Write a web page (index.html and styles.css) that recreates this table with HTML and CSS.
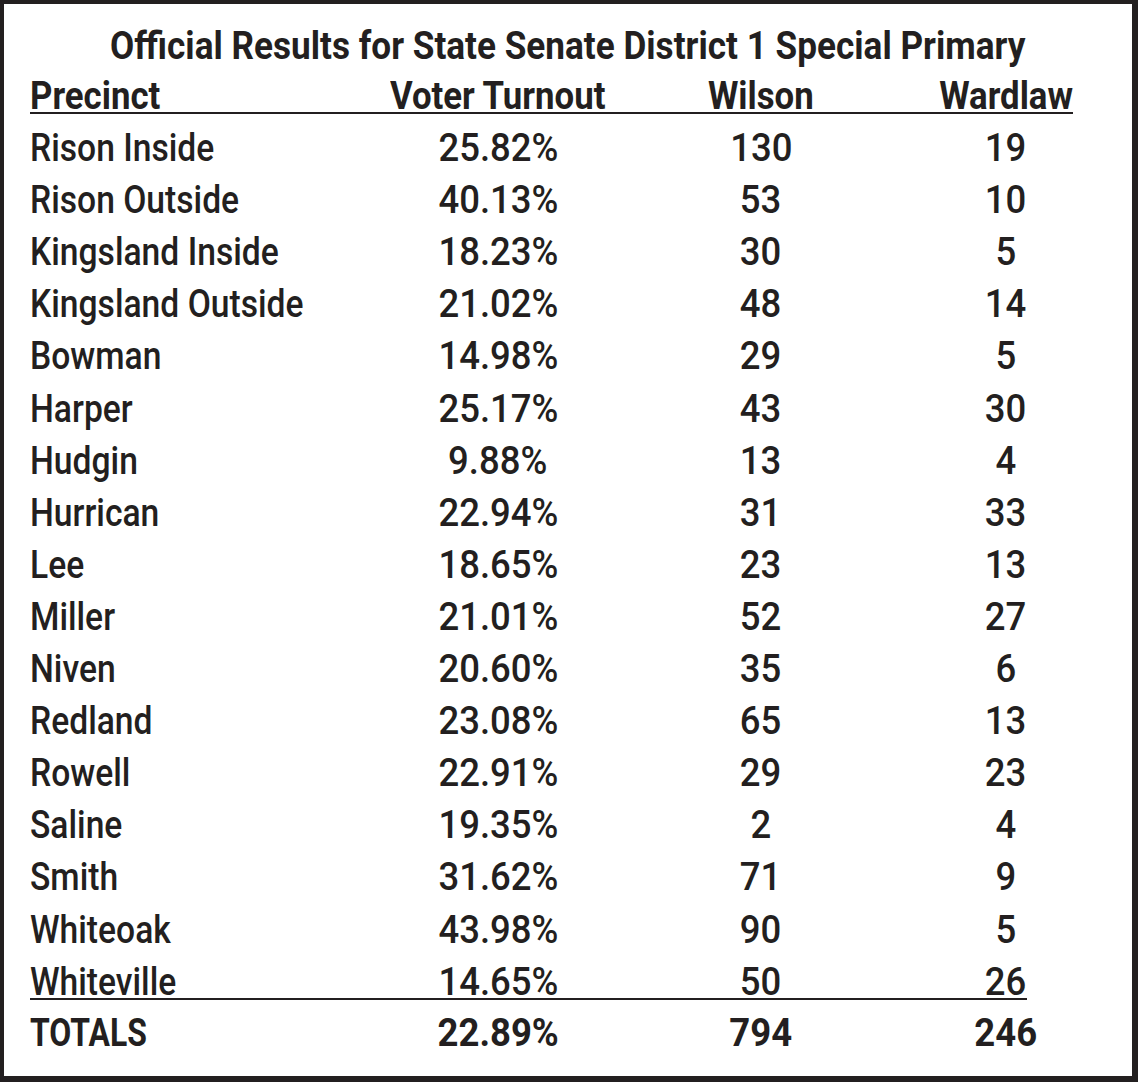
FILE: index.html
```html
<!DOCTYPE html>
<html lang="en">
<head>
<meta charset="utf-8">
<title>Official Results for State Senate District 1 Special Primary</title>
<link rel="stylesheet" href="styles.css">
</head>
<body>
<div class="sheet">
  <h1 class="title"><span class="t">Official Results for State Senate District 1 Special Primary</span></h1>
  <div class="table">
    <div class="row head">
      <div class="cell"><span class="t">Precinct</span></div>
      <div class="cell"><span class="t">Voter Turnout</span></div>
      <div class="cell"><span class="t">Wilson</span></div>
      <div class="cell"><span class="t">Wardlaw</span></div>
    </div>
    <div class="row"><div class="cell"><span class="t">Rison Inside</span></div><div class="cell"><span class="t">25.82%</span></div><div class="cell"><span class="t">130</span></div><div class="cell"><span class="t">19</span></div></div>
    <div class="row"><div class="cell"><span class="t">Rison Outside</span></div><div class="cell"><span class="t">40.13%</span></div><div class="cell"><span class="t">53</span></div><div class="cell"><span class="t">10</span></div></div>
    <div class="row"><div class="cell"><span class="t">Kingsland Inside</span></div><div class="cell"><span class="t">18.23%</span></div><div class="cell"><span class="t">30</span></div><div class="cell"><span class="t">5</span></div></div>
    <div class="row"><div class="cell"><span class="t">Kingsland Outside</span></div><div class="cell"><span class="t">21.02%</span></div><div class="cell"><span class="t">48</span></div><div class="cell"><span class="t">14</span></div></div>
    <div class="row"><div class="cell"><span class="t">Bowman</span></div><div class="cell"><span class="t">14.98%</span></div><div class="cell"><span class="t">29</span></div><div class="cell"><span class="t">5</span></div></div>
    <div class="row"><div class="cell"><span class="t">Harper</span></div><div class="cell"><span class="t">25.17%</span></div><div class="cell"><span class="t">43</span></div><div class="cell"><span class="t">30</span></div></div>
    <div class="row"><div class="cell"><span class="t">Hudgin</span></div><div class="cell"><span class="t">9.88%</span></div><div class="cell"><span class="t">13</span></div><div class="cell"><span class="t">4</span></div></div>
    <div class="row"><div class="cell"><span class="t">Hurrican</span></div><div class="cell"><span class="t">22.94%</span></div><div class="cell"><span class="t">31</span></div><div class="cell"><span class="t">33</span></div></div>
    <div class="row"><div class="cell"><span class="t">Lee</span></div><div class="cell"><span class="t">18.65%</span></div><div class="cell"><span class="t">23</span></div><div class="cell"><span class="t">13</span></div></div>
    <div class="row"><div class="cell"><span class="t">Miller</span></div><div class="cell"><span class="t">21.01%</span></div><div class="cell"><span class="t">52</span></div><div class="cell"><span class="t">27</span></div></div>
    <div class="row"><div class="cell"><span class="t">Niven</span></div><div class="cell"><span class="t">20.60%</span></div><div class="cell"><span class="t">35</span></div><div class="cell"><span class="t">6</span></div></div>
    <div class="row"><div class="cell"><span class="t">Redland</span></div><div class="cell"><span class="t">23.08%</span></div><div class="cell"><span class="t">65</span></div><div class="cell"><span class="t">13</span></div></div>
    <div class="row"><div class="cell"><span class="t">Rowell</span></div><div class="cell"><span class="t">22.91%</span></div><div class="cell"><span class="t">29</span></div><div class="cell"><span class="t">23</span></div></div>
    <div class="row"><div class="cell"><span class="t">Saline</span></div><div class="cell"><span class="t">19.35%</span></div><div class="cell"><span class="t">2</span></div><div class="cell"><span class="t">4</span></div></div>
    <div class="row"><div class="cell"><span class="t">Smith</span></div><div class="cell"><span class="t">31.62%</span></div><div class="cell"><span class="t">71</span></div><div class="cell"><span class="t">9</span></div></div>
    <div class="row"><div class="cell"><span class="t">Whiteoak</span></div><div class="cell"><span class="t">43.98%</span></div><div class="cell"><span class="t">90</span></div><div class="cell"><span class="t">5</span></div></div>
    <div class="row last"><div class="cell"><span class="t">Whiteville</span></div><div class="cell"><span class="t">14.65%</span></div><div class="cell"><span class="t">50</span></div><div class="cell"><span class="t">26</span></div></div>
    <div class="row total"><div class="cell"><span class="t">TOTALS</span></div><div class="cell"><span class="t">22.89%</span></div><div class="cell"><span class="t">794</span></div><div class="cell"><span class="t">246</span></div></div>
  </div>
</div>
</body>
</html>
```

FILE: styles.css
```css
* { box-sizing: border-box; }
html, body { margin: 0; padding: 0; background: #fff; }
body {
  font-family: Roboto, "Liberation Sans", sans-serif;
  color: #231f20;
}
.sheet {
  width: 1138px;
  height: 1082px;
  border-style: solid;
  border-color: #231f20;
  border-width: 4px 6px 6px 4px;
  padding-top: 18px;
  background: #fff;
}
.title {
  margin: 0;
  font-size: 38px;
  font-weight: 700;
  line-height: 48px;
  text-align: center;
  white-space: nowrap;
}
.table { margin-left: 26px; }
.row {
  display: grid;
  grid-template-columns: 330px 276px 250px 240px;
  height: 52.1px;
  line-height: 52.1px;
  font-size: 38px;
  font-weight: 500;
}
.cell { text-align: center; white-space: nowrap; }
.cell:first-child { text-align: left; }
.t { display: inline-block; transform: scaleX(0.96); transform-origin: center; }
.cell:first-child .t { transform: scaleX(0.885); transform-origin: left center; }
.title .t { transform: scaleX(0.925); transform-origin: center; }
.head .cell .t,
.head .cell:first-child .t { transform: scaleX(0.915); }
.head {
  font-weight: 700;
  background: linear-gradient(#231f20, #231f20) 0 42px / 1043px 2px no-repeat;
}
.last {
  background: linear-gradient(#231f20, #231f20) 0 42px / 997px 2px no-repeat;
}
.total {
  font-weight: 700;
  height: 50px;
  line-height: 50px;
}
.total .cell:first-child .t { transform: scaleX(0.84); }
```
